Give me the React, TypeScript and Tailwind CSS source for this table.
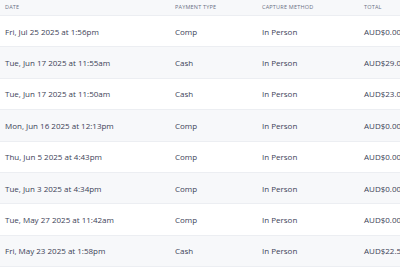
const rows = [
  { date: 'Fri, Jul 25 2025 at 1:56pm', type: 'Comp', method: 'In Person', total: 'AUD$0.00' },
  { date: 'Tue, Jun 17 2025 at 11:55am', type: 'Cash', method: 'In Person', total: 'AUD$29.00' },
  { date: 'Tue, Jun 17 2025 at 11:50am', type: 'Cash', method: 'In Person', total: 'AUD$23.00' },
  { date: 'Mon, Jun 16 2025 at 12:13pm', type: 'Comp', method: 'In Person', total: 'AUD$0.00' },
  { date: 'Thu, Jun 5 2025 at 4:43pm', type: 'Comp', method: 'In Person', total: 'AUD$0.00' },
  { date: 'Tue, Jun 3 2025 at 4:34pm', type: 'Comp', method: 'In Person', total: 'AUD$0.00' },
  { date: 'Tue, May 27 2025 at 11:42am', type: 'Comp', method: 'In Person', total: 'AUD$0.00' },
  { date: 'Fri, May 23 2025 at 1:58pm', type: 'Cash', method: 'In Person', total: 'AUD$22.55' },
];

export default function App() {
  return (
    <div className="w-[400px] h-[269px] overflow-hidden bg-white font-['Open_Sans',sans-serif]">
      <div className="w-[420px]">
        <div className="flex items-center h-[16px] bg-[#f7f8fa] border-b border-[#eceef2] text-[5.5px] tracking-[0.2px] text-[#6b7185] uppercase">
          <div className="w-[175px] pl-[5px]">Date</div>
          <div className="w-[87px]">Payment Type</div>
          <div className="w-[102px]">Capture Method</div>
          <div>Total</div>
        </div>
        {rows.map((r, i) => (
          <div
            key={i}
            className={`flex items-center h-[31.4px] pt-px border-b border-[#eceef2] text-[8px] text-[#3c4257] ${i % 2 === 1 ? 'bg-[#f7f8fa]' : 'bg-white'}`}
          >
            <div className="w-[175px] pl-[5px]">{r.date}</div>
            <div className="w-[87px]">{r.type}</div>
            <div className="w-[102px]">{r.method}</div>
            <div>{r.total}</div>
          </div>
        ))}
      </div>
    </div>
  );
}
